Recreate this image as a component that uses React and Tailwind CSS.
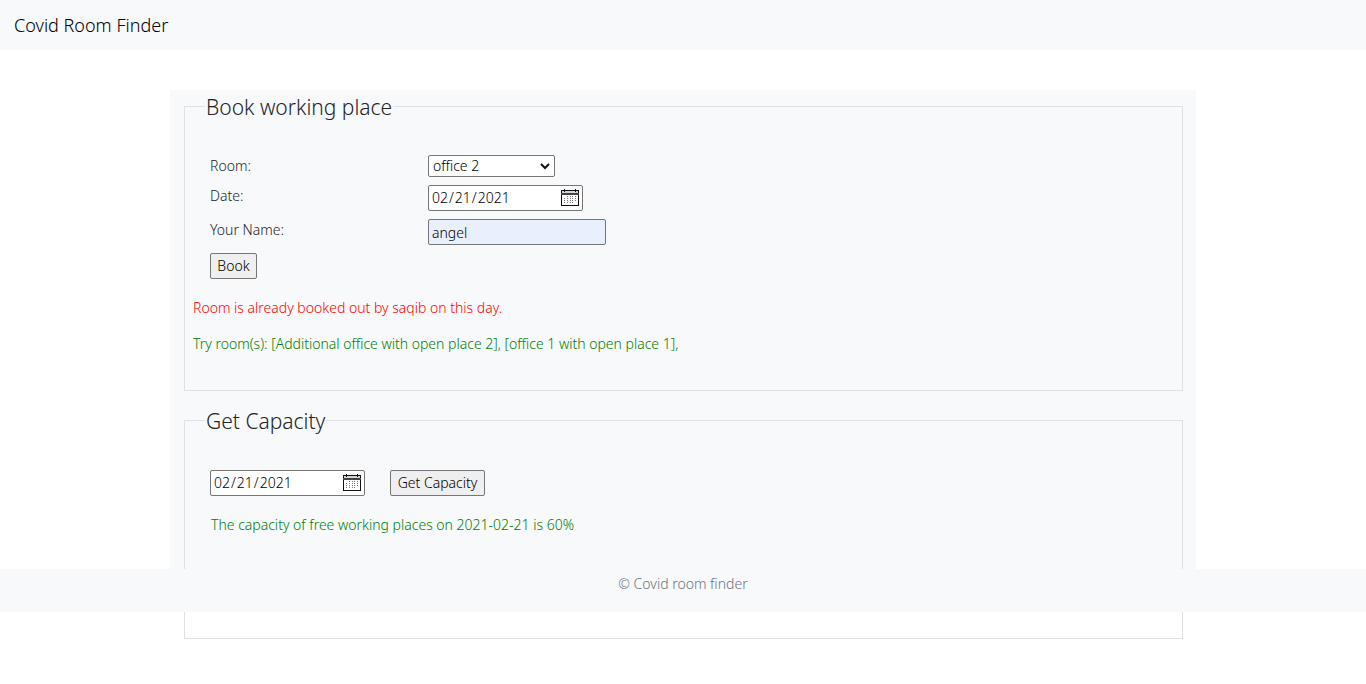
import React from "react";

const control =
  "block rounded-[2px] border border-[#767676] text-sm leading-5 text-black outline-none";

function CalendarIcon() {
  return (
    <svg
      className="pointer-events-none absolute right-1 top-1 h-[18px] w-[18px]"
      viewBox="0 0 18 18"
      shapeRendering="crispEdges"
      aria-hidden="true"
    >
      <rect x="0.5" y="1.5" width="17" height="15" fill="#fff" stroke="#111" />
      <rect x="1" y="2" width="16" height="2" fill="#d4d4d4" />
      <rect x="0" y="4" width="18" height="2" fill="#444" />
      <rect x="3" y="0" width="1" height="3" fill="#111" />
      <rect x="14" y="0" width="1" height="3" fill="#111" />
      <g fill="#777">
        <path d="M6 7h1v1H6zM9 7h1v1H9zM11 7h1v1h-1zM14 7h1v1h-1z" />
        <path d="M3 9h1v1H3zM6 9h1v1H6zM9 9h1v1H9zM11 9h1v1h-1zM14 9h1v1h-1z" />
        <path d="M3 11h1v1H3zM6 11h1v1H6zM9 11h1v1H9zM11 11h1v1h-1zM14 11h1v1h-1z" />
        <path d="M3 13h1v1H3zM6 13h1v1H6zM9 13h1v1H9zM11 13h1v1h-1z" />
      </g>
    </svg>
  );
}

function DateField({ id, label }) {
  return (
    <div className="relative w-[155px]">
      <input
        id={id}
        type="date"
        aria-label={label}
        defaultValue="2021-02-21"
        className={`${control} h-[26px] w-full bg-white px-0.5 [&::-webkit-calendar-picker-indicator]:opacity-0`}
      />
      <CalendarIcon />
    </div>
  );
}

function Section({ title, className, children }) {
  return (
    <fieldset className={`border border-[#dee2e6] px-2 ${className}`}>
      <legend className="ml-3 px-px pt-0.5 text-[21px] leading-[30px]">
        {title}
      </legend>
      {children}
    </fieldset>
  );
}

export default function App() {
  return (
    <div className="min-h-screen bg-white font-['Noto_Sans','Open_Sans',sans-serif] text-sm font-[350] text-[#212529]">
      <header className="flex h-[50px] items-center bg-[#f8f9fa] px-3.5">
        <a href="#" className="text-lg text-black">
          Covid Room Finder
        </a>
      </header>

      <main className="mx-auto mt-10 h-[479px] max-w-[1026px] bg-[#f8f9fa] pl-3.5 pr-[13px]">
        <Section title="Book working place" className="h-[301px]">
          <form
            className="ml-[17px] mt-[33px] grid grid-cols-[218px_1fr] gap-y-2"
            onSubmit={(e) => e.preventDefault()}
          >
            <label htmlFor="room" className="leading-[22px]">
              Room:
            </label>
            <div className="relative w-[127px]">
              <select
                id="room"
                defaultValue="office 2"
                className={`${control} h-[22px] w-full appearance-none bg-white px-1`}
              >
                <option>office 1</option>
                <option>office 2</option>
                <option>Additional office</option>
              </select>
              <svg
                className="pointer-events-none absolute right-1 top-[7px] h-2 w-3"
                viewBox="0 0 12 8"
                fill="none"
                stroke="#111"
                strokeWidth="2"
                aria-hidden="true"
              >
                <path d="M2 2l4 4 4-4" />
              </svg>
            </div>
            <label htmlFor="date" className="leading-[22px]">
              Date:
            </label>
            <DateField id="date" />
            <label htmlFor="name" className="leading-[22px]">
              Your Name:
            </label>
            <input
              id="name"
              type="text"
              defaultValue="angel"
              className={`${control} h-[26px] w-[178px] bg-[#e8f0fe] px-[3px]`}
            />
            <button
              type="submit"
              className={`${control} h-[26px] w-[47px] bg-[#efefef]`}
            >
              Book
            </button>
          </form>
          <p className="mt-[18px] leading-[22px] text-[#ff0000]">
            Room is already booked out by saqib on this day.
          </p>
          <p className="mt-3.5 leading-[22px] text-[#008000]">
            Try room(s): [Additional office with open place 2], [office 1 with
            open place 1],
          </p>
        </Section>

        <Section title="Get Capacity" className="mt-[13px] h-[235px]">
          <form
            className="ml-[17px] mt-[34px] flex gap-[25px]"
            onSubmit={(e) => e.preventDefault()}
          >
            <DateField id="capacity-date" label="Capacity date" />
            <button
              type="submit"
              className={`${control} h-[26px] w-[95px] bg-[#efefef]`}
            >
              Get Capacity
            </button>
          </form>
          <p className="ml-[18px] mt-[18px] leading-[22px] text-[#008000]">
            The capacity of free working places on 2021-02-21 is 60%
          </p>
        </Section>
      </main>

      <footer className="relative z-10 h-[43px] bg-[#f8f9fa] pt-1 text-center leading-[22px] text-[#6c757d]">
        © Covid room finder
      </footer>
    </div>
  );
}
